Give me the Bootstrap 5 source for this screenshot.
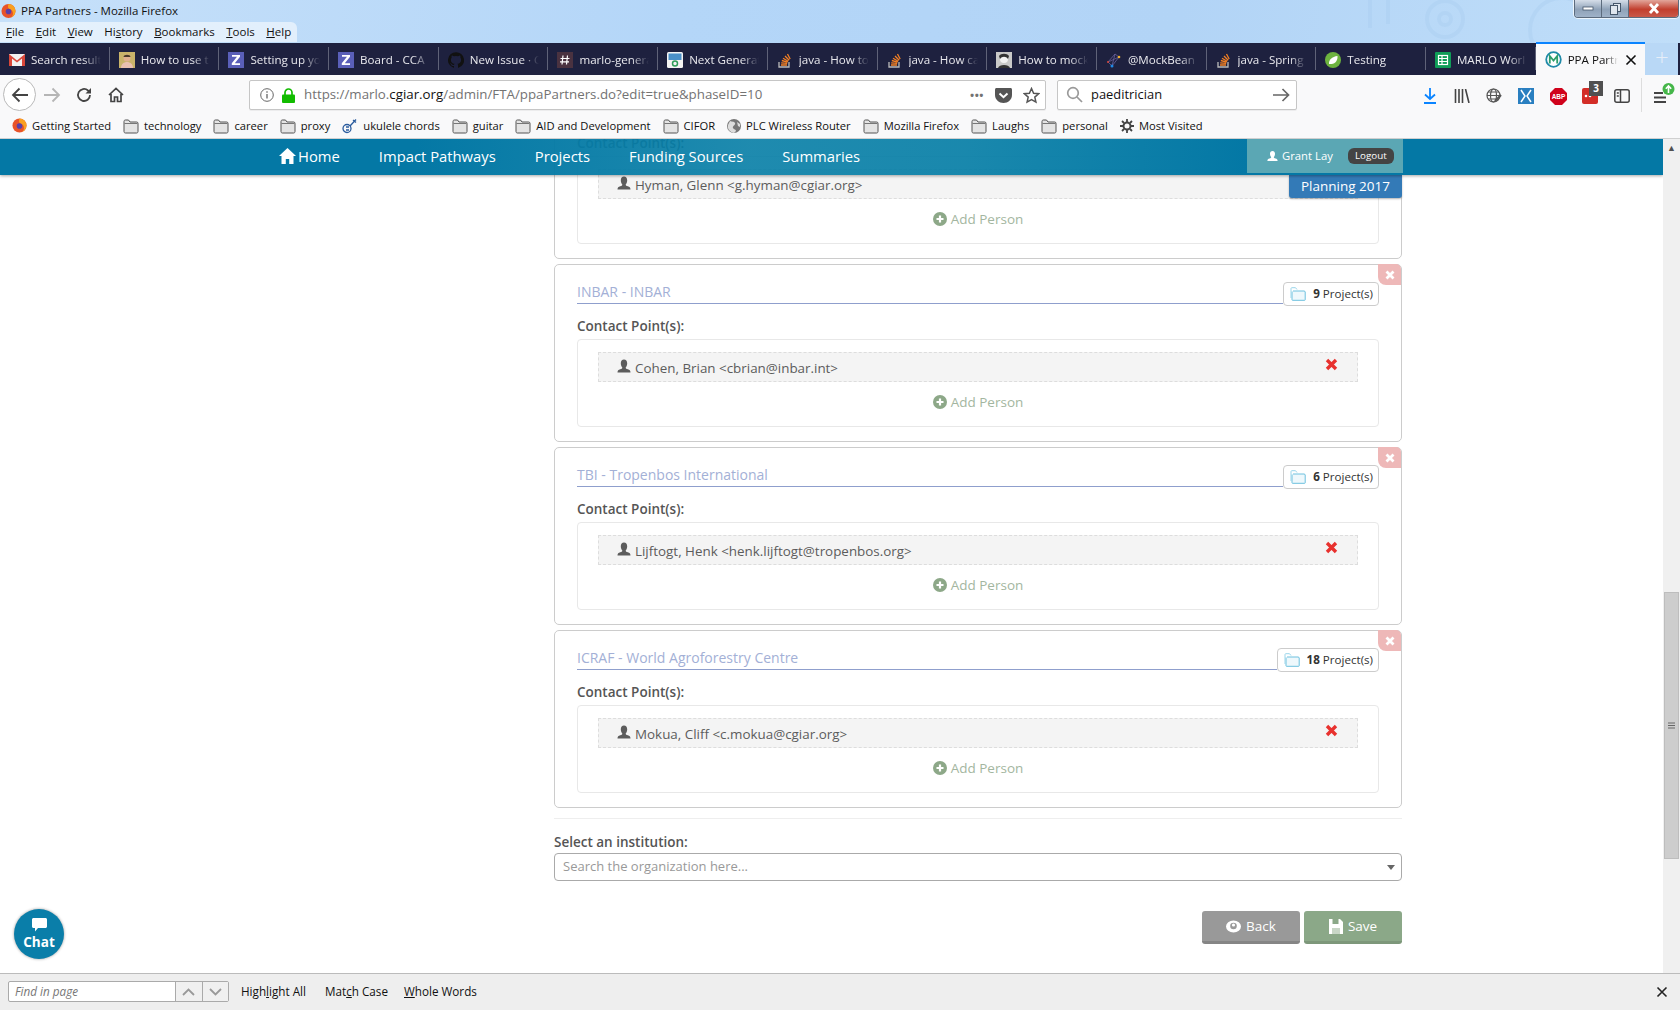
<!DOCTYPE html>
<html lang="en">
<head>
<meta charset="utf-8">
<title>PPA Partners - Mozilla Firefox</title>
<link href="https://cdn.jsdelivr.net/npm/bootstrap@5.3.0/dist/css/bootstrap.min.css" rel="stylesheet">
<style>
html,body{height:100%;overflow:hidden;background:#fff}
body{font-family:"Open Sans","Liberation Sans",sans-serif;color:#555;font-size:14px}
.ff-win{height:1010px;width:1680px}
.ff-title{height:43px;background:linear-gradient(100deg,#c6e0f9 0%,#b4d6f8 40%,#b2d4f6 70%,#c0def9 100%);position:relative;flex:none;font-size:11.500px;color:#111}
.ff-caption{height:22px;padding-left:1px;gap:5px;line-height:20px}
.ff-menu{height:20px;width:297px;background:rgba(255,255,255,.55);border-radius:0 6px 0 0;gap:11.500px;padding-left:6px;line-height:20px}
.ff-watermark{position:absolute;left:1300px;top:0}
.ff-winbtns{position:absolute;left:1574px;top:0;height:18px;width:105px;border:1px solid #5c6b7d;border-top:0;border-radius:0 0 4px 4px;overflow:hidden;box-shadow:0 0 0 1px rgba(255,255,255,.7)}
.ff-wb{background:linear-gradient(#d5dee9,#8fa2b8 55%,#9fb2c8);width:27px;border-right:1px solid #5c6b7d}
.ff-wb-close{flex:1;background:linear-gradient(#e2a69b,#c23f2e 55%,#c9594a);color:#fff;border:0}
.ff-tabs{height:32px;background:#1e213f;flex:none;font-size:11.600px;color:#e9e9ee}
.ff-tab{width:109.700px;height:32px;padding-left:9px;padding-top:2px;gap:6px;position:relative;flex:none}
.ff-tab::after{content:"";position:absolute;right:0;top:4px;bottom:5px;width:1px;background:#5f6278}
.ff-tab-text{white-space:nowrap;overflow:hidden;flex:1;-webkit-mask-image:linear-gradient(90deg,#000 75%,transparent 100%);mask-image:linear-gradient(90deg,#000 75%,transparent 100%);padding-right:7px;margin-right:9px}
.ff-tab-on{background:#f9f9fa;color:#111;border-top:2px solid #0a84ff;height:33px;margin-top:-1px;padding-left:9px;padding-top:0}
.ff-tab-on::after{display:none}
.ff-tab-on .ff-tab-text{max-width:50px;margin-right:0;padding-right:0}
.ff-plus{color:#e6eef8;font-size:24px;width:33px;text-align:center;line-height:30px;margin-top:-1px;font-weight:300;background:#b9d8f6;height:33px}
.ff-nav{height:39px;background:#f9f9fa;flex:none;position:relative}
.ff-back{width:33px;height:33px;border-radius:50%;border:1px solid #b9b9b9;background:#fff;margin-left:3px}
.ff-navbtn{width:32px}
.ff-homebtn{margin-right:117px}
.ff-url{height:30px;background:#fff;border:1px solid #c6c6c6;border-radius:2px;font-size:13.300px;color:#737373;box-shadow:0 1px 0 rgba(0,0,0,.05);flex:none;padding-top:1px}
.ff-url1{width:797px;margin-right:11px;padding-left:10px}
.ff-url1 b{font-weight:400;color:#111}
.ff-urltext{margin-left:1px}
.ff-dots{margin-right:11px;font-size:11px;letter-spacing:.5px}
.ff-pocket{margin-right:11px}
.ff-star{margin-right:5px}
.ff-url2{width:240px;padding:0 6px 0 8px;color:#111;font-size:12.900px}
.ff-tools{margin-left:auto;padding-left:117px;padding-right:3px}
.ff-tool{width:32px;text-align:center;flex:none}
.ff-badge3{position:absolute;left:15px;top:-3px;width:14px;height:15px;background:#505050;color:#fff;font-size:10px;font-weight:700;line-height:15px}
.ff-sep{width:1px;height:34px;background:#ddd;margin:0 9px 0 3px;flex:none}
.ff-marks{height:25px;background:#f9f9fa;border-bottom:1px solid #d0d0d0;flex:none;font-size:11.200px;color:#111;padding-left:12px;gap:12px;white-space:nowrap}
.ff-mark{gap:5px}
.ff-body{flex:1;min-height:0}
.ff-page{flex:1;position:relative;overflow:hidden;background:#fff}
.ff-sbar{width:17px;background:#f0f0f0;flex:none;position:relative;padding:0 1px}
.ff-thumb{position:absolute;left:1px;right:1px;top:453px;height:267px;background:#cdcdcd;border:1px solid #bdbdbd}
.ff-arrow{font-size:9px;text-align:center;color:#505050;height:17px;line-height:17px}
.site-head{position:absolute;left:0;right:0;top:0;height:36px;background:linear-gradient(90deg,rgba(4,120,165,1) 0%,rgba(4,120,165,1) 25%,rgba(6,126,166,.9) 45%,rgba(6,126,166,.92) 58%,rgba(4,120,165,1) 75%);box-shadow:0 1px 3px rgba(0,0,0,.35);z-index:5;color:#fff;font-size:14.800px;padding-left:279px}
.site-link{color:#fff;text-decoration:none;margin-right:39px;line-height:34px}
.site-user{position:absolute;left:1247px;top:0;width:156px;height:34px;background:#5ba7b4;font-size:11.300px;padding-left:20px}
.site-logout{background:#444;border-radius:6px;width:46px;height:16px;line-height:16px;text-align:center;font-size:9.800px;margin-left:15px}
.site-phase{position:absolute;left:1289px;top:36px;width:113px;height:23px;background:#337ab7;color:#fff;border-radius:0 0 3px 3px;text-align:center;line-height:23px;font-size:13.500px;z-index:4;box-shadow:0 1px 2px rgba(0,0,0,.3)}
.pp-col{width:848px;margin-left:554px}
.pp-first{margin-top:-58px}
.pp-first .pp-label{margin-top:12px}
.pp-card{height:178px;border:1px solid #ccc;border-radius:5px;padding:17px 22px 0;margin-bottom:5px;position:relative}
.pp-x{position:absolute;right:-1px;top:-1px;width:23px;height:21px;background:#eeb8b8;border-radius:0 5px 0 8px;text-align:center;line-height:19px;margin-right:1px}
.pp-name{flex:1;height:22px;border-bottom:1px solid #8f9fcd;color:#a3b0d6;font-size:14px;line-height:19px}
.pp-count{height:24px;border:1px solid #ccc;border-radius:4px;padding:0 5px 1px 6px;font-size:11.600px;color:#333;gap:7px;background:#fff}
.pp-count b{font-weight:700}
.pp-label{font-weight:600;font-size:13.500px;height:20px;line-height:20px;margin:10px 0 3px;color:#555}
.pp-box{height:88px;border:1px solid #e8e8e8;border-radius:4px;padding:12px 20px 0}
.pp-row{height:30px;background:#f4f4f4;border:1px dashed #ddd;padding:0 19px 0 18px;font-size:13.400px;color:#5c5c5c}
.pp-who{gap:4px;line-height:30px;padding-top:1px}
.pp-who svg{margin-top:-3px}
.pp-del{margin-top:-6px}
.pp-add{height:20px;margin-top:10px;color:#a3b6a0;font-size:13.500px;gap:4px;line-height:20px}
.pp-rule{height:1px;background:#eee;margin:10px 0 0}
.pp-sel-label{font-weight:600;font-size:13.500px;margin:13px 0 0;height:21px;line-height:21px;color:#555}
.pp-select{height:28px;border:1px solid #aaa;border-radius:4px;padding:0 6px 0 8px;color:#999;font-size:13px}
.pp-caret{width:0;height:0;border-left:4px solid transparent;border-right:4px solid transparent;border-top:5px solid #666}
.pp-actions{gap:4px;margin-top:30px}
.pp-btn{width:98px;height:33px;border:0;border-radius:3px;color:#fff;font-size:13.500px;gap:5px;padding:0}
.pp-back{background:#999;border-bottom:3px solid #858585}
.pp-save{background:#8ba888;border-bottom:3px solid #7d977a}
.pp-chat{position:absolute;left:14px;top:770px;width:50px;height:50px;border-radius:50%;background:#0a7ea9;color:#fff;font-weight:700;font-size:13.500px;box-shadow:0 0 3px rgba(0,0,0,.4);z-index:6;line-height:16px;padding-top:9px}
.pp-chat svg{margin-bottom:2px}
.ff-find{height:37px;background:#eeeeee;border-top:1px solid #bbb;flex:none;font-size:11.700px;color:#111;padding-left:8px;position:relative}
.ff-findbox{height:21px;width:221px;border:1px solid #aaa;border-radius:2px;background:#fff;margin-top:-1px}
.ff-findin{width:166px;font-style:italic;color:#777;padding-left:6px;line-height:19px}
.ff-findbtn{flex:1;background:#f0f0f0;border-left:1px solid #aaa;text-align:center}
.ff-findlab{position:absolute;top:0;line-height:35px}
.ff-lab1{left:241px}
.ff-lab2{left:325px}
.ff-lab3{left:404px}
.ff-findx{margin-right:12px}
.ff-homegap{margin-left:-2px}
</style>
</head>
<body>
<svg width="0" height="0" class="position-absolute">
<defs>
<symbol id="i-person" viewBox="0 0 14 14"><path d="M7 .5c2 0 3.200 1.500 3.200 3.700 0 1.700-.7 3.300-1.500 4.200-.2.900.4 1.300 2.200 1.900 1.600.6 2.600 1.100 2.600 3.200H.5c0-2.100 1-2.600 2.600-3.200 1.800-.6 2.400-1 2.200-1.900C4.500 7.500 3.800 5.900 3.800 4.200 3.800 2 5 .5 7 .5z" fill="currentColor"/></symbol>
<symbol id="i-folder" viewBox="0 0 16 16"><path d="M1 3.500C1 2.700 1.500 2 2.300 2h3.200l1.500 2h6.700c.8 0 1.300.5 1.300 1.300v8.200c0 .8-.5 1.500-1.300 1.500H2.300C1.500 15 1 14.300 1 13.500z" fill="#e4e4e4" stroke="#555" stroke-width="1"/><path d="M1.500 5.500h13" stroke="#777" stroke-width="1"/></symbol>
<symbol id="i-so" viewBox="0 0 16 16"><path d="M2 10v5h10v-5" fill="none" stroke="#bbb" stroke-width="1.300"/><path d="M4 13h6M4.200 10.800l6 .5M4.800 8.500l5.800 1.600M6 6.200l5.200 3M8 4l4.200 4.200M10.500 2l2.700 5" stroke="#f48024" stroke-width="1.300" fill="none"/></symbol>
<symbol id="i-z" viewBox="0 0 16 16"><rect width="16" height="16" fill="#5a5fb8"/><path d="M4 3h8v1.800L6.800 11.200H12V13H3.800v-1.800L9 4.800H4z" fill="#fff"/></symbol>
<symbol id="i-plus" viewBox="0 0 14 14"><circle cx="7" cy="7" r="7" fill="#8da888"/><path d="M7 3.500v7M3.500 7h7" stroke="#fff" stroke-width="2.200"/></symbol>
<symbol id="i-redx" viewBox="0 0 13 13"><path d="M2 2l9 9M11 2l-9 9" stroke="#e8312e" stroke-width="3.400" fill="none"/></symbol>
<symbol id="i-wx" viewBox="0 0 10 10"><path d="M1.500 1.500l7 7M8.500 1.500l-7 7" stroke="#fff" stroke-width="2.800" fill="none"/></symbol>
<symbol id="i-pfolder" viewBox="0 0 16 14"><path d="M1 3V1.500C1 1 1.400.7 2 .7h3.500L7 2.500" fill="none" stroke="#9bd5ea" stroke-width="1"/><path d="M3 4h11c.7 0 1.200.4 1.200 1v7.800c0 .3-.2.500-.5.500H2.500c-.3 0-.5-.2-.5-.5V4.500" fill="#eef8fc" stroke="#6cc0de" stroke-width="1"/><path d="M1 3v8" stroke="#9bd5ea" stroke-width="1"/></symbol>
</defs>
</svg>

<div class="ff-win d-flex flex-column">

  <div class="ff-title">
    <svg class="ff-watermark" width="280" height="43" viewBox="0 0 280 43" fill="none" stroke="#a9cdf0" stroke-width="4" opacity=".4"><circle cx="145" cy="19" r="18"/><circle cx="145" cy="19" r="6"/><path d="M70 0v28M88 0v24"/><circle cx="262" cy="30" r="32"/></svg>
    <div class="ff-caption d-flex align-items-center">
      <svg width="15" height="16" viewBox="0 0 16 16"><circle cx="8" cy="8" r="7.500" fill="#e8532a"/><path d="M8 .5a7.500 7.500 0 0 1 7.500 7.500c0 3-2 6-5 7 3-2 3-6 .5-8-1-.8-3-1-3.500-3C7.300 3 7.500 1.500 8 .5z" fill="#f9a020"/><circle cx="8" cy="8.500" r="3" fill="#5a3fa8"/></svg>
      <span>PPA Partners - Mozilla Firefox</span>
    </div>
    <div class="ff-menu d-flex">
      <span><u>F</u>ile</span><span><u>E</u>dit</span><span><u>V</u>iew</span><span>Hi<u>s</u>tory</span><span><u>B</u>ookmarks</span><span><u>T</u>ools</span><span><u>H</u>elp</span>
    </div>
    <div class="ff-winbtns d-flex">
      <div class="ff-wb d-flex align-items-center justify-content-center"><svg width="12" height="6"><rect x="1" y="1" width="10" height="3" fill="#fff" stroke="#45566a" stroke-width=".8"/></svg></div>
      <div class="ff-wb d-flex align-items-center justify-content-center"><svg width="12" height="13" fill="#dfe6ee" stroke="#45566a"><rect x="4.500" y="1.500" width="7" height="8"/><rect x="1.500" y="3.500" width="7" height="9"/></svg></div>
      <div class="ff-wb-close d-flex align-items-center justify-content-center"><svg width="14" height="11" viewBox="0 0 14 11"><path d="M3 1l8 9M11 1l-8 9" stroke="#fff" stroke-width="2.800"/></svg></div>
    </div>
  </div>

  <div class="ff-tabs d-flex">
    <div class="ff-tab d-flex align-items-center"><svg width="16" height="12" viewBox="0 0 16 12"><rect width="16" height="12" fill="#f1f1f1"/><path d="M0 0l8 6.500L16 0v12h-3V4.500L8 8.500 3 4.500V12H0z" fill="#d9473a"/></svg><span class="ff-tab-text">Search results</span></div>
    <div class="ff-tab d-flex align-items-center"><svg width="16" height="16" viewBox="0 0 16 16"><rect width="16" height="16" fill="#c9b36a"/><circle cx="8" cy="6" r="3.500" fill="#e0b090"/><path d="M2 16c0-4 3-6 6-6s6 2 6 6z" fill="#e9c0b0"/><path d="M4.500 5c0-3 7-3 7 0z" fill="#4a3a2a"/></svg><span class="ff-tab-text">How to use t</span></div>
    <div class="ff-tab d-flex align-items-center"><svg width="16" height="16"><use href="#i-z"/></svg><span class="ff-tab-text">Setting up yo</span></div>
    <div class="ff-tab d-flex align-items-center"><svg width="16" height="16"><use href="#i-z"/></svg><span class="ff-tab-text">Board - CCA</span></div>
    <div class="ff-tab d-flex align-items-center"><svg width="16" height="16" viewBox="0 0 16 16"><path d="M8 .2a8 8 0 0 0-2.500 15.600c.4.100.5-.2.500-.4v-1.400c-2.200.5-2.700-1-2.700-1-.4-.9-.9-1.200-.9-1.200-.7-.5.100-.5.100-.5.800.100 1.200.8 1.200.8.700 1.200 1.900.9 2.300.7.100-.5.300-.9.500-1.100-1.800-.2-3.600-.9-3.600-4 0-.9.300-1.600.8-2.100-.1-.2-.4-1 .1-2.100 0 0 .7-.2 2.200.8a7.600 7.600 0 0 1 4 0c1.500-1 2.200-.8 2.200-.8.400 1.100.2 1.900.1 2.100.5.600.8 1.300.8 2.100 0 3.100-1.900 3.800-3.600 4 .3.200.5.700.5 1.500v2.200c0 .2.100.5.600.4A8 8 0 0 0 8 .2z" fill="#111"/></svg><span class="ff-tab-text">New Issue · C</span></div>
    <div class="ff-tab d-flex align-items-center"><svg width="16" height="16" viewBox="0 0 16 16"><rect width="16" height="16" fill="#4a3240"/><path d="M6 3.500L5 12.500M10.500 3.500l-1 9M3.500 6.500h9M3 9.800h9" stroke="#fff" stroke-width="1.200"/></svg><span class="ff-tab-text">marlo-genera</span></div>
    <div class="ff-tab d-flex align-items-center"><svg width="16" height="16" viewBox="0 0 16 16"><rect width="16" height="16" rx="1.500" fill="#f4f4f4"/><rect x="1.500" y="1.500" width="13" height="6.500" fill="#4a90c8"/><circle cx="8" cy="11.500" r="2.500" fill="none" stroke="#2f9e5a" stroke-width="1.500"/></svg><span class="ff-tab-text">Next Generat</span></div>
    <div class="ff-tab d-flex align-items-center"><svg width="16" height="16"><use href="#i-so"/></svg><span class="ff-tab-text">java - How to</span></div>
    <div class="ff-tab d-flex align-items-center"><svg width="16" height="16"><use href="#i-so"/></svg><span class="ff-tab-text">java - How ca</span></div>
    <div class="ff-tab d-flex align-items-center"><svg width="16" height="16" viewBox="0 0 16 16"><rect width="16" height="16" fill="#c9c9c9"/><circle cx="8" cy="7" r="4" fill="#f2f2f2"/><path d="M3 4c2-3 8-3 10 0l-1 3c-2-3-6-3-8 0zM2 16c1-4 11-4 12 0z" fill="#333"/></svg><span class="ff-tab-text">How to mock</span></div>
    <div class="ff-tab d-flex align-items-center"><svg width="16" height="16" viewBox="0 0 16 16" fill="none" stroke="#6a5f9a" stroke-width=".8"><path d="M2 10L9 2l4 3-7 9zM2 10l11-5M9 2l-3 12"/><circle cx="13" cy="5" r="1.300" fill="#f0b030" stroke="none"/><circle cx="6" cy="14" r="1.500" fill="#1e88e5" stroke="none"/><circle cx="2" cy="10" r="1" fill="#d9473a" stroke="none"/></svg><span class="ff-tab-text">@MockBean</span></div>
    <div class="ff-tab d-flex align-items-center"><svg width="16" height="16"><use href="#i-so"/></svg><span class="ff-tab-text">java - Spring</span></div>
    <div class="ff-tab d-flex align-items-center"><svg width="16" height="16" viewBox="0 0 16 16"><circle cx="8" cy="8" r="8" fill="#6db33f"/><path d="M4 12c-.5-4 3-7.500 8.500-8 .3 4-2 8-6 8-1 0-1.800 0-2.500 0z" fill="#fff"/></svg><span class="ff-tab-text">Testing</span></div>
    <div class="ff-tab d-flex align-items-center"><svg width="16" height="16" viewBox="0 0 16 16"><rect width="16" height="16" rx="1" fill="#0f9d58"/><rect x="3.500" y="3.500" width="9" height="9" fill="none" stroke="#fff" stroke-width="1.200"/><path d="M3.500 6.500h9M3.500 9.500h9M7 3.500v9" stroke="#fff" stroke-width="1.200"/></svg><span class="ff-tab-text">MARLO Worl</span></div>
    <div class="ff-tab ff-tab-on d-flex align-items-center"><svg width="17" height="17" viewBox="0 0 17 17"><circle cx="8.500" cy="8.500" r="7.300" fill="#fff" stroke="#1f8aa8" stroke-width="1.800"/><path d="M4.800 12.500V5l3.700 4.500L12.200 5v7.500" fill="none" stroke="#2e9e6a" stroke-width="1.800"/></svg><span class="ff-tab-text">PPA Partn</span><svg class="ms-auto me-2" width="12" height="12" viewBox="0 0 12 12"><path d="M1.500 1.500l9 9M10.500 1.500l-9 9" stroke="#111" stroke-width="1.600"/></svg></div>
    <div class="ff-plus">+</div>
  </div>

  <div class="ff-nav d-flex align-items-center">
    <div class="ff-back d-flex align-items-center justify-content-center"><svg width="18" height="16" viewBox="0 0 18 16" fill="none" stroke="#444" stroke-width="1.800"><path d="M17 8H2M8.500 1.500L2 8l6.500 6.500"/></svg></div>
    <div class="ff-navbtn d-flex justify-content-center"><svg width="18" height="16" viewBox="0 0 18 16" fill="none" stroke="#b5b5b5" stroke-width="1.800"><path d="M1 8h15M9.500 1.500L16 8l-6.500 6.500"/></svg></div>
    <div class="ff-navbtn d-flex justify-content-center"><svg width="16" height="16" viewBox="0 0 16 16" fill="none" stroke="#444" stroke-width="1.800"><path d="M14 8a6 6 0 1 1-2-4.500L14 5"/><path d="M15 1v5.500H9.500" fill="#444" stroke="none"/></svg></div>
    <div class="ff-navbtn ff-homebtn d-flex justify-content-center"><svg width="16" height="16" viewBox="0 0 16 16" fill="none" stroke="#444" stroke-width="1.700"><path d="M1 8l7-6.500L15 8M3 7v7.500h3.500V10h3v4.500H13V7"/></svg></div>
    <div class="ff-url ff-url1 d-flex align-items-center">
      <svg width="14" height="14" viewBox="0 0 14 14" fill="none" stroke="#666"><circle cx="7" cy="7" r="6.300"/><path d="M7 6v4.500M7 3.200v1.500" stroke-width="1.300"/></svg>
      <svg class="ms-2 me-2" width="13" height="15" viewBox="0 0 13 15"><path d="M3 7V4.500a3.500 3.500 0 0 1 7 0V7" fill="none" stroke="#12bc00" stroke-width="1.700"/><rect y="6.500" width="13" height="8.500" rx="1" fill="#12bc00"/></svg>
      <span class="flex-grow-1 ff-urltext">https://marlo.<b>cgiar.org</b>/admin/FTA/ppaPartners.do?edit=true&amp;phaseID=10</span>
      <span class="fw-bold ff-dots">•••</span>
      <svg class="ff-pocket" width="17" height="15" viewBox="0 0 17 15"><path d="M1.500 0h14c.8 0 1.500.7 1.500 1.500V7c0 4.500-4 8-8.500 8S0 11.500 0 7V1.500C0 .7.700 0 1.500 0z" fill="#555"/><path d="M4.500 5.500l4 3.700 4-3.700" fill="none" stroke="#fff" stroke-width="2"/></svg>
      <svg class="ff-star" width="17" height="17" viewBox="0 0 17 17"><path d="M8.500 1.500l2.100 4.700 5 .5-3.800 3.400 1.100 5-4.400-2.600-4.400 2.600 1.100-5L1.400 6.700l5-.5z" fill="none" stroke="#555" stroke-width="1.500"/></svg>
    </div>
    <div class="ff-url ff-url2 d-flex align-items-center">
      <svg class="me-2" width="17" height="17" viewBox="0 0 17 17" fill="none" stroke="#999" stroke-width="1.700"><circle cx="7" cy="7" r="5.300"/><path d="M11 11l5 5"/></svg>
      <span class="flex-grow-1">paeditrician</span>
      <svg width="17" height="14" viewBox="0 0 17 14" fill="none" stroke="#666" stroke-width="1.700"><path d="M0 7h15.500M9.500 1l6 6-6 6"/></svg>
    </div>
    <div class="ff-tools d-flex align-items-center">
      <div class="ff-tool"><svg width="14" height="16" viewBox="0 0 14 16" fill="none" stroke="#0a84ff" stroke-width="1.800"><path d="M7 0v11M2 6.500L7 11l5-4.500M1 15h12"/></svg></div>
      <div class="ff-tool"><svg width="16" height="14" viewBox="0 0 16 14" fill="none" stroke="#444" stroke-width="1.600"><path d="M1.500 0v14M5 0v14M8.500 0v14M11.500 0l3.500 14"/></svg></div>
      <div class="ff-tool"><svg width="17" height="16" viewBox="0 0 17 16" fill="none" stroke="#555" stroke-width="1.200"><circle cx="7.500" cy="7.500" r="6.500"/><ellipse cx="7.500" cy="7.500" rx="3" ry="6.500"/><path d="M1 7.500h13M2 4h11M2 11h11"/><path d="M9 13l6-6" stroke-width="2.200"/></svg></div>
      <div class="ff-tool"><svg width="16" height="16" viewBox="0 0 16 16"><rect width="16" height="16" fill="#2a7fc0"/><path d="M3 2l4 6-4 6M13 2L9 8l4 6" fill="none" stroke="#fff" stroke-width="1.500"/></svg></div>
      <div class="ff-tool"><svg width="17" height="17" viewBox="0 0 17 17"><path d="M5 0h7l5 5v7l-5 5H5l-5-5V5z" fill="#d0021b"/><text x="8.500" y="11" font-size="6.500" font-weight="700" fill="#fff" text-anchor="middle" font-family="Liberation Sans">ABP</text></svg></div>
      <div class="ff-tool position-relative"><svg width="16" height="16" viewBox="0 0 16 16"><rect width="16" height="16" rx="2" fill="#d32d27"/><circle cx="4" cy="8" r="1.300" fill="#fff"/><circle cx="8" cy="8" r="1.300" fill="#fff"/></svg><span class="ff-badge3">3</span></div>
      <div class="ff-tool"><svg width="16" height="14" viewBox="0 0 16 14" fill="none" stroke="#444" stroke-width="1.500"><rect x=".8" y=".8" width="14.400" height="12.400" rx="2"/><path d="M6.500 1v12M2.800 4h2M2.800 7h2"/></svg></div>
      <div class="ff-sep"></div>
      <div class="position-relative"><svg width="26" height="26" viewBox="0 0 26 26"><path d="M3 11h9M3 15.500h12M3 20h12" stroke="#444" stroke-width="1.800"/><circle cx="17.500" cy="7" r="6" fill="#45b649"/><path d="M17.500 11V4M14.800 6.800l2.700-2.800 2.700 2.800" fill="none" stroke="#fff" stroke-width="1.600"/></svg></div>
    </div>
  </div>

  <div class="ff-marks d-flex align-items-center">
    <div class="ff-mark d-flex align-items-center"><svg width="15" height="15" viewBox="0 0 16 16"><circle cx="8" cy="8" r="7.500" fill="#e8532a"/><path d="M8 .5a7.500 7.500 0 0 1 7.500 7.500c0 3-2 6-5 7 3-2 3-6 .5-8-1-.8-3-1-3.500-3C7.300 3 7.500 1.500 8 .5z" fill="#f9a020"/><circle cx="8" cy="8.500" r="3" fill="#5a3fa8"/></svg><span>Getting Started</span></div>
    <div class="ff-mark d-flex align-items-center"><svg width="16" height="16"><use href="#i-folder"/></svg><span>technology</span></div>
    <div class="ff-mark d-flex align-items-center"><svg width="16" height="16"><use href="#i-folder"/></svg><span>career</span></div>
    <div class="ff-mark d-flex align-items-center"><svg width="16" height="16"><use href="#i-folder"/></svg><span>proxy</span></div>
    <div class="ff-mark d-flex align-items-center"><svg width="16" height="16" viewBox="0 0 16 16" fill="none" stroke="#2b5c9e" stroke-width="1.300"><circle cx="5" cy="10.500" r="4"/><path d="M8 8l6-6.500M11 2l3 2.500"/><path d="M4 9h3M4 12h3"/></svg><span>ukulele chords</span></div>
    <div class="ff-mark d-flex align-items-center"><svg width="16" height="16"><use href="#i-folder"/></svg><span>guitar</span></div>
    <div class="ff-mark d-flex align-items-center"><svg width="16" height="16"><use href="#i-folder"/></svg><span>AID and Development</span></div>
    <div class="ff-mark d-flex align-items-center"><svg width="16" height="16"><use href="#i-folder"/></svg><span>CIFOR</span></div>
    <div class="ff-mark d-flex align-items-center"><svg width="14" height="14" viewBox="0 0 14 14"><circle cx="7" cy="7" r="7" fill="#777"/><path d="M3 2c2 1 4 0 5 2S5 7 6 9s3 1 3 3l-2 2C3 13 0 10 1 6zM10 3l3 2 0 3-2-1z" fill="#ddd"/></svg><span>PLC Wireless Router</span></div>
    <div class="ff-mark d-flex align-items-center"><svg width="16" height="16"><use href="#i-folder"/></svg><span>Mozilla Firefox</span></div>
    <div class="ff-mark d-flex align-items-center"><svg width="16" height="16"><use href="#i-folder"/></svg><span>Laughs</span></div>
    <div class="ff-mark d-flex align-items-center"><svg width="16" height="16"><use href="#i-folder"/></svg><span>personal</span></div>
    <div class="ff-mark d-flex align-items-center"><svg width="14" height="14" viewBox="0 0 14 14" fill="none" stroke="#444"><circle cx="7" cy="7" r="3.500" stroke-width="2"/><path d="M7 0v3M7 11v3M0 7h3M11 7h3M2 2l2 2M10 10l2 2M12 2l-2 2M4 10l-2 2" stroke-width="1.800"/></svg><span>Most Visited</span></div>
  </div>

  <div class="ff-body d-flex">
    <div class="ff-page">
      <div class="site-head d-flex align-items-start">
        <a class="site-link d-flex align-items-center" href="#"><svg class="me-1" width="17" height="16" viewBox="0 0 17 16"><path d="M8.500 0L0 8h2.500v8h4.300v-5h3.400v5h4.300V8H17z" fill="#fff"/></svg><span class="ff-homegap">Home</span></a>
        <a class="site-link" href="#">Impact Pathways</a>
        <a class="site-link" href="#">Projects</a>
        <a class="site-link" href="#">Funding Sources</a>
        <a class="site-link" href="#">Summaries</a>
        <div class="site-user d-flex align-items-center"><svg class="me-1" width="11" height="12"><use href="#i-person"/></svg><span>Grant Lay</span><span class="site-logout">Logout</span></div>
      </div>
      <div class="site-phase">Planning 2017</div>

      <div class="pp-col">
        <div class="pp-card pp-first">
          <div class="d-flex align-items-start"><div class="pp-name">&nbsp;</div></div>
          <div class="pp-label">Contact Point(s):</div>
          <div class="pp-box">
            <div class="pp-row d-flex align-items-center"><span class="pp-who d-flex align-items-center"><svg width="14" height="14"><use href="#i-person"/></svg>Hyman, Glenn &lt;g.hyman@cgiar.org&gt;</span></div>
            <div class="pp-add d-flex justify-content-center align-items-center"><svg width="14" height="14"><use href="#i-plus"/></svg>Add Person</div>
          </div>
        </div>

        <div class="pp-card">
          <div class="pp-x"><svg width="10" height="10"><use href="#i-wx"/></svg></div>
          <div class="d-flex align-items-start"><div class="pp-name">INBAR - INBAR</div><div class="pp-count d-flex align-items-center"><svg width="16" height="14"><use href="#i-pfolder"/></svg><span><b>9</b> Project(s)</span></div></div>
          <div class="pp-label">Contact Point(s):</div>
          <div class="pp-box">
            <div class="pp-row d-flex align-items-center justify-content-between"><span class="pp-who d-flex align-items-center"><svg width="14" height="14"><use href="#i-person"/></svg>Cohen, Brian &lt;cbrian@inbar.int&gt;</span><svg class="pp-del" width="13" height="13"><use href="#i-redx"/></svg></div>
            <div class="pp-add d-flex justify-content-center align-items-center"><svg width="14" height="14"><use href="#i-plus"/></svg>Add Person</div>
          </div>
        </div>

        <div class="pp-card">
          <div class="pp-x"><svg width="10" height="10"><use href="#i-wx"/></svg></div>
          <div class="d-flex align-items-start"><div class="pp-name">TBI - Tropenbos International</div><div class="pp-count d-flex align-items-center"><svg width="16" height="14"><use href="#i-pfolder"/></svg><span><b>6</b> Project(s)</span></div></div>
          <div class="pp-label">Contact Point(s):</div>
          <div class="pp-box">
            <div class="pp-row d-flex align-items-center justify-content-between"><span class="pp-who d-flex align-items-center"><svg width="14" height="14"><use href="#i-person"/></svg>Lijftogt, Henk &lt;henk.lijftogt@tropenbos.org&gt;</span><svg class="pp-del" width="13" height="13"><use href="#i-redx"/></svg></div>
            <div class="pp-add d-flex justify-content-center align-items-center"><svg width="14" height="14"><use href="#i-plus"/></svg>Add Person</div>
          </div>
        </div>

        <div class="pp-card mb-0">
          <div class="pp-x"><svg width="10" height="10"><use href="#i-wx"/></svg></div>
          <div class="d-flex align-items-start"><div class="pp-name">ICRAF - World Agroforestry Centre</div><div class="pp-count d-flex align-items-center"><svg width="16" height="14"><use href="#i-pfolder"/></svg><span><b>18</b> Project(s)</span></div></div>
          <div class="pp-label">Contact Point(s):</div>
          <div class="pp-box">
            <div class="pp-row d-flex align-items-center justify-content-between"><span class="pp-who d-flex align-items-center"><svg width="14" height="14"><use href="#i-person"/></svg>Mokua, Cliff &lt;c.mokua@cgiar.org&gt;</span><svg class="pp-del" width="13" height="13"><use href="#i-redx"/></svg></div>
            <div class="pp-add d-flex justify-content-center align-items-center"><svg width="14" height="14"><use href="#i-plus"/></svg>Add Person</div>
          </div>
        </div>

        <div class="pp-rule"></div>
        <div class="pp-sel-label">Select an institution:</div>
        <div class="pp-select d-flex align-items-center justify-content-between"><span>Search the organization here...</span><span class="pp-caret"></span></div>
        <div class="pp-actions d-flex justify-content-end">
          <button class="pp-btn pp-back d-flex align-items-center justify-content-center" type="button"><svg width="15" height="13" viewBox="0 0 15 13"><ellipse cx="7.500" cy="6.500" rx="7.500" ry="6" fill="#fff"/><circle cx="7.500" cy="6" r="3.300" fill="#999"/><circle cx="7.500" cy="5" r="1.600" fill="#fff"/></svg>Back</button>
          <button class="pp-btn pp-save d-flex align-items-center justify-content-center" type="button"><svg width="14" height="15" viewBox="0 0 14 15"><path d="M0 0h11l3 3v12H0z" fill="#fff"/><rect x="3.500" y="0" width="6" height="5" fill="#8ba888"/><rect x="3" y="9" width="8" height="6" fill="#c8d6c6"/></svg>Save</button>
        </div>
      </div>

      <div class="pp-chat text-center"><svg class="d-block mx-auto" width="15" height="14" viewBox="0 0 15 14"><path d="M1.500 0h12c.8 0 1.500.7 1.500 1.500v7c0 .8-.7 1.500-1.500 1.500H6l-3 3.500V10H1.500C.7 10 0 9.300 0 8.500v-7C0 .7.700 0 1.500 0z" fill="#fff"/></svg>Chat</div>
    </div>

    <div class="ff-sbar">
      <div class="ff-arrow">▲</div>
      <div class="ff-thumb d-flex align-items-center justify-content-center"><svg width="7" height="7"><path d="M0 1h7M0 3.500h7M0 6h7" stroke="#666"/></svg></div>
    </div>
  </div>

  <div class="ff-find d-flex align-items-center">
    <div class="ff-findbox d-flex">
      <div class="ff-findin">Find in page</div>
      <div class="ff-findbtn d-flex align-items-center justify-content-center"><svg width="13" height="8" viewBox="0 0 13 8" fill="none" stroke="#999" stroke-width="1.800"><path d="M1 7l5.500-5.500L12 7"/></svg></div>
      <div class="ff-findbtn d-flex align-items-center justify-content-center"><svg width="13" height="8" viewBox="0 0 13 8" fill="none" stroke="#999" stroke-width="1.800"><path d="M1 1l5.500 5.500L12 1"/></svg></div>
    </div>
    <span class="ff-findlab ff-lab1">High<u>l</u>ight All</span>
    <span class="ff-findlab ff-lab2">Mat<u>c</u>h Case</span>
    <span class="ff-findlab ff-lab3"><u>W</u>hole Words</span>
    <svg class="ms-auto ff-findx" width="12" height="12" viewBox="0 0 12 12"><path d="M1.500 1.500l9 9M10.500 1.500l-9 9" stroke="#222" stroke-width="1.600"/></svg>
  </div>
</div>
</body>
</html>
